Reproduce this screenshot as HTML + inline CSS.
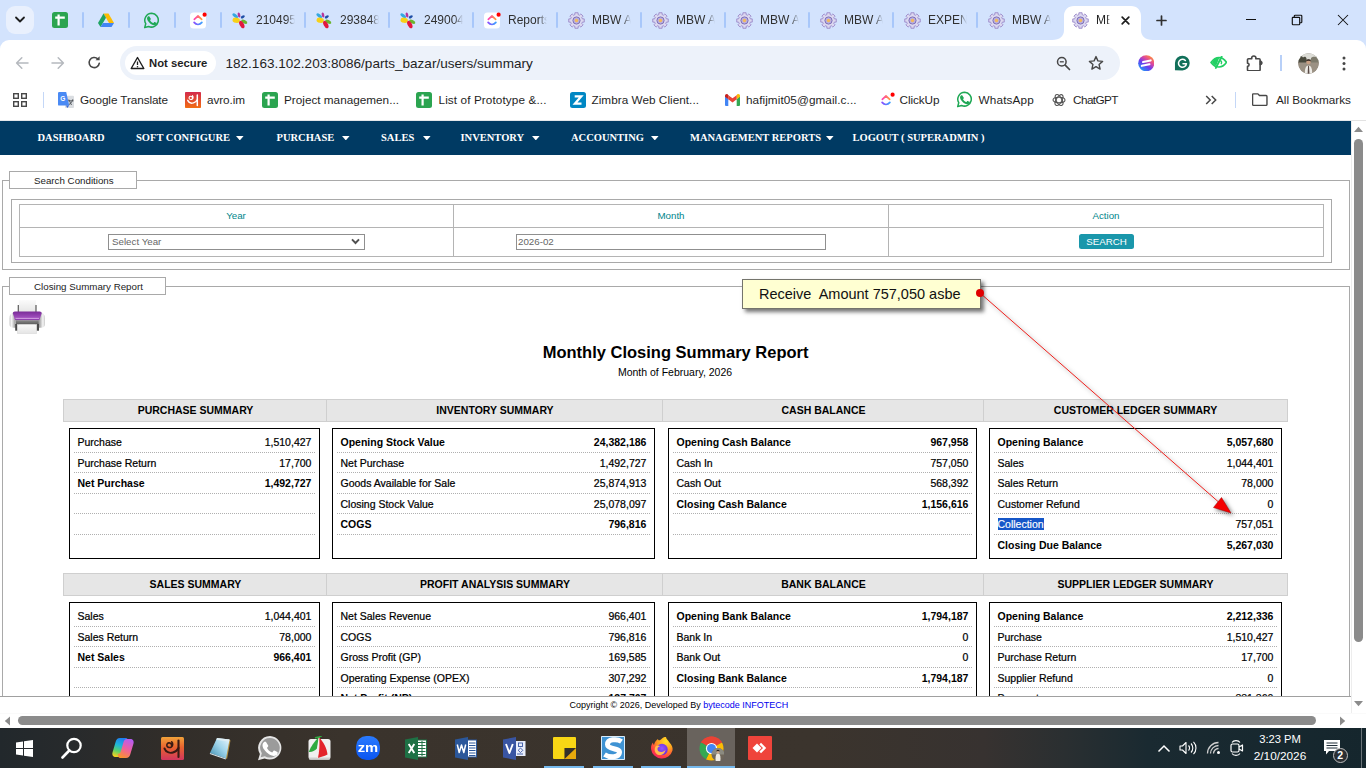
<!DOCTYPE html><html lang="en"><head><meta charset="utf-8"><title>MBW AUTO</title><style>
*{box-sizing:border-box;margin:0;padding:0}
html,body{width:1366px;height:768px;overflow:hidden;background:#fff}
body{position:relative;font-family:"Liberation Sans",sans-serif;color:#000}
.abs{position:absolute}
.t{position:absolute;white-space:pre;line-height:1}
/* chrome */
#tabstrip{left:0;top:0;width:1366px;height:52px;background:#d3e3fd}
#toolbar{left:0;top:40px;width:1366px;height:46px;background:#fff;border-radius:9px 9px 0 0}
#bmbar{left:0;top:86px;width:1366px;height:34px;background:#fff}
#bmline{left:0;top:120px;width:1366px;height:1px;background:#e3e6ea}
.tsep{position:absolute;top:12px;width:2px;height:16px;background:#a8c7fa;border-radius:1px}
.ttxt{position:absolute;top:13px;font-size:12px;line-height:15px;color:#303030;white-space:pre;overflow:hidden;width:39px;
  -webkit-mask-image:linear-gradient(90deg,#000 78%,transparent 100%);mask-image:linear-gradient(90deg,#000 78%,transparent 100%)}
.bm{position:absolute;top:92px;font-size:11.75px;line-height:15px;color:#1f1f1f;white-space:pre}
/* page */
#page{left:0;top:121px;width:1351px;height:592px;background:#fff;overflow:hidden}
#nav{left:0;top:0;width:1351px;height:34px;background:#003a63}
.nv{position:absolute;top:10px;font-family:"Liberation Serif",serif;font-weight:700;font-size:10.5px;line-height:13px;color:#fff;white-space:pre}
.caret{position:absolute;top:15px;width:0;height:0;border-left:3.75px solid transparent;border-right:3.75px solid transparent;border-top:4.5px solid #fff}
.ln{position:absolute;background:#a9a9a9}
.lg{position:absolute;border:1px solid #a9a9a9;background:#fff;font-size:9.75px;line-height:15px;padding-top:1px;color:#222;white-space:pre}
.teal{color:#00868b}
.hd{position:absolute;height:23px;background:#e6e6e6;border:1px solid #cfcfcf;font-weight:700;font-size:10.5px;line-height:21px;text-align:center;color:#000;white-space:pre}
.bx{position:absolute;border:1.5px solid #000;height:131px;background:#fff}
.rw{position:absolute;left:4px;right:4px;height:20.5px;border-bottom:1px dotted #b0b0b0;font-size:10.5px;line-height:20px;white-space:pre}
.rw b,.rw span{position:absolute;top:0}
.rw span{-webkit-text-stroke:.22px #000}
.rw .l{left:3.500px}
.rw .r{right:3.600px}
.rw.last{border-bottom:none}
.b{font-weight:700}
/* taskbar */
#taskbar{left:0;top:728px;width:1366px;height:40px;background:linear-gradient(90deg,#22282c 0,#272a2c 5%,#312d29 12%,#3a332c 25%,#3b342d 60%,#373230 72%,#2a2f31 78%,#1a2a31 84%,#15262d 100%)}
</style></head><body><div id="tabstrip" class="abs"><div class="abs" style="left:6px;top:6px;width:28px;height:28px;border-radius:9px;background:#e9f0fd"></div><svg class="abs" style="left:14px;top:15px" width="12" height="10" viewBox="0 0 12 10"><path d="M2 2.5 L6 6.5 L10 2.5" fill="none" stroke="#1f1f1f" stroke-width="1.8" stroke-linecap="round" stroke-linejoin="round"/></svg><svg class="abs" style="left:52px;top:12px" width="16" height="16" viewBox="0 0 16 16"><rect width="16" height="16" rx="2.5" fill="#2ba450"/><path d="M3.2 5.6h9.6M6.6 2.6v10.8" stroke="#fff" stroke-width="2.2" fill="none"/></svg><svg class="abs" style="left:98px;top:12px" width="16" height="16" viewBox="0 0 16 16"><path d="M5.5 1.5h5L16 11h-5z" fill="#fbbc04"/><path d="M5.5 1.5L0 11l2.5 4L8 5.8z" fill="#1fa463"/><path d="M2.5 15h11L16 11H5z" fill="#4285f4"/><path d="M8 5.8L5.5 1.5h5z" fill="#ea4335" opacity=".0"/></svg><svg class="abs" style="left:143px;top:11.5px" width="17" height="17" viewBox="0 0 17 17"><path d="M8.700 1.300a6.900 6.900 0 0 0-5.950 10.400L1.700 15.600l4-1.050A6.900 6.900 0 1 0 8.700 1.300z" fill="none" stroke="#1fa855" stroke-width="1.500" stroke-linejoin="round"/><path d="M6.500 4.700c-.2-.4-.35-.4-.55-.4h-.4c-.2 0-.45.050-.65.300-.25.250-.85.850-.85 2s.85 2.300 1 2.450c.1.150 1.650 2.650 4.100 3.600 2 .75 2.400.6 2.850.55.450-.05 1.400-.55 1.600-1.100.2-.55.2-1 .150-1.100-.05-.1-.2-.15-.45-.25l-1.550-.75c-.2-.1-.4-.1-.55.100l-.7.900c-.15.150-.25.200-.5.050-1.250-.6-2.150-1.350-2.850-2.600-.1-.250 0-.350.100-.5l.5-.65c.1-.15.100-.3.050-.45z" fill="#1fa855"/></svg><svg class="abs" style="left:190px;top:10.5px" width="18" height="18" viewBox="0 0 18 18"><defs><linearGradient id="cuA190" x1="0" y1="0" x2="1" y2="0"><stop offset="0" stop-color="#ff3fb4"/><stop offset="1" stop-color="#ff9a3c"/></linearGradient><linearGradient id="cuB190" x1="0" y1="0" x2="1" y2="0"><stop offset="0" stop-color="#8a4dff"/><stop offset="1" stop-color="#3aa0ff"/></linearGradient></defs><rect x="0" y="1.500" width="16" height="16" rx="3.500" fill="#fff"/><path d="M4.300 8.300L8 5l3.700 3.300" fill="none" stroke="url(#cuA190)" stroke-width="1.700" stroke-linecap="round" stroke-linejoin="round"/><path d="M4.100 11.400c1.100 1.400 2.400 2.100 3.900 2.100s2.800-.7 3.900-2.100" fill="none" stroke="url(#cuB190)" stroke-width="1.700" stroke-linecap="round"/><circle cx="14.600" cy="3.700" r="2.100" fill="#f00"/></svg><div class="tsep" style="left:82px"></div><div class="tsep" style="left:128px"></div><div class="tsep" style="left:174px"></div><div class="tsep" style="left:220px"></div><div class="tsep" style="left:304px"></div><div class="tsep" style="left:388px"></div><div class="tsep" style="left:472px"></div><div class="tsep" style="left:556px"></div><div class="tsep" style="left:640px"></div><div class="tsep" style="left:724px"></div><div class="tsep" style="left:808px"></div><div class="tsep" style="left:892px"></div><div class="tsep" style="left:976px"></div><svg class="abs" style="left:231px;top:12px" width="18" height="17" viewBox="0 0 18 17"><ellipse cx="4.200" cy="3.800" rx="3.300" ry="1.500" transform="rotate(38 4.200 3.800)" fill="#35a8e0"/><ellipse cx="8" cy="3" rx="1.300" ry="2.600" transform="rotate(-12 8 3)" fill="#b5359c"/><ellipse cx="11.800" cy="4.900" rx="2.200" ry="1.300" transform="rotate(-30 11.800 4.900)" fill="#1f4fa8"/><ellipse cx="5.200" cy="8.300" rx="3.700" ry="2.600" transform="rotate(10 5.200 8.300)" fill="#f7d117"/><ellipse cx="13.300" cy="9.700" rx="3.300" ry="1.700" transform="rotate(28 13.300 9.700)" fill="#6cb52d"/><ellipse cx="10.800" cy="12.600" rx="2.100" ry="4" transform="rotate(-28 10.800 12.600)" fill="#e3173e"/></svg><div class="ttxt" style="left:256px">210495</div><svg class="abs" style="left:315px;top:12px" width="18" height="17" viewBox="0 0 18 17"><ellipse cx="4.200" cy="3.800" rx="3.300" ry="1.500" transform="rotate(38 4.200 3.800)" fill="#35a8e0"/><ellipse cx="8" cy="3" rx="1.300" ry="2.600" transform="rotate(-12 8 3)" fill="#b5359c"/><ellipse cx="11.800" cy="4.900" rx="2.200" ry="1.300" transform="rotate(-30 11.800 4.900)" fill="#1f4fa8"/><ellipse cx="5.200" cy="8.300" rx="3.700" ry="2.600" transform="rotate(10 5.200 8.300)" fill="#f7d117"/><ellipse cx="13.300" cy="9.700" rx="3.300" ry="1.700" transform="rotate(28 13.300 9.700)" fill="#6cb52d"/><ellipse cx="10.800" cy="12.600" rx="2.100" ry="4" transform="rotate(-28 10.800 12.600)" fill="#e3173e"/></svg><div class="ttxt" style="left:340px">293848</div><svg class="abs" style="left:399px;top:12px" width="18" height="17" viewBox="0 0 18 17"><ellipse cx="4.200" cy="3.800" rx="3.300" ry="1.500" transform="rotate(38 4.200 3.800)" fill="#35a8e0"/><ellipse cx="8" cy="3" rx="1.300" ry="2.600" transform="rotate(-12 8 3)" fill="#b5359c"/><ellipse cx="11.800" cy="4.900" rx="2.200" ry="1.300" transform="rotate(-30 11.800 4.900)" fill="#1f4fa8"/><ellipse cx="5.200" cy="8.300" rx="3.700" ry="2.600" transform="rotate(10 5.200 8.300)" fill="#f7d117"/><ellipse cx="13.300" cy="9.700" rx="3.300" ry="1.700" transform="rotate(28 13.300 9.700)" fill="#6cb52d"/><ellipse cx="10.800" cy="12.600" rx="2.100" ry="4" transform="rotate(-28 10.800 12.600)" fill="#e3173e"/></svg><div class="ttxt" style="left:424px">249004</div><svg class="abs" style="left:484px;top:10.5px" width="18" height="18" viewBox="0 0 18 18"><defs><linearGradient id="cuA484" x1="0" y1="0" x2="1" y2="0"><stop offset="0" stop-color="#ff3fb4"/><stop offset="1" stop-color="#ff9a3c"/></linearGradient><linearGradient id="cuB484" x1="0" y1="0" x2="1" y2="0"><stop offset="0" stop-color="#8a4dff"/><stop offset="1" stop-color="#3aa0ff"/></linearGradient></defs><rect x="0" y="1.500" width="16" height="16" rx="3.500" fill="#fff"/><path d="M4.300 8.300L8 5l3.700 3.300" fill="none" stroke="url(#cuA484)" stroke-width="1.700" stroke-linecap="round" stroke-linejoin="round"/><path d="M4.100 11.400c1.100 1.400 2.400 2.100 3.900 2.100s2.800-.7 3.900-2.100" fill="none" stroke="url(#cuB484)" stroke-width="1.700" stroke-linecap="round"/><circle cx="14.600" cy="3.700" r="2.100" fill="#f00"/></svg><div class="ttxt" style="left:508px">Reports</div><svg class="abs" style="left:567.5px;top:12px" width="17" height="17" viewBox="0 0 17 17"><path d="M6.89 2.62L6.90 0.76L10.10 0.76L10.11 2.62L11.52 3.20L12.84 1.90L15.10 4.16L13.80 5.48L14.38 6.89L16.24 6.90L16.24 10.10L14.38 10.11L13.80 11.52L15.10 12.84L12.84 15.10L11.52 13.80L10.11 14.38L10.10 16.24L6.90 16.24L6.89 14.38L5.48 13.80L4.16 15.10L1.90 12.84L3.20 11.52L2.62 10.11L0.76 10.10L0.76 6.90L2.62 6.89L3.20 5.48L1.90 4.16L4.16 1.90L5.48 3.20Z" fill="#dcd8f0" stroke="#9a88c8" stroke-width=".9" stroke-linejoin="round"/><circle cx="8.500" cy="8.500" r="3.600" fill="#b9b0e0" stroke="#7f70b8" stroke-width="1"/><circle cx="8.500" cy="8.500" r="1.700" fill="#f2b95e"/></svg><div class="ttxt" style="left:592px">MBW AUTO</div><svg class="abs" style="left:651.5px;top:12px" width="17" height="17" viewBox="0 0 17 17"><path d="M6.89 2.62L6.90 0.76L10.10 0.76L10.11 2.62L11.52 3.20L12.84 1.90L15.10 4.16L13.80 5.48L14.38 6.89L16.24 6.90L16.24 10.10L14.38 10.11L13.80 11.52L15.10 12.84L12.84 15.10L11.52 13.80L10.11 14.38L10.10 16.24L6.90 16.24L6.89 14.38L5.48 13.80L4.16 15.10L1.90 12.84L3.20 11.52L2.62 10.11L0.76 10.10L0.76 6.90L2.62 6.89L3.20 5.48L1.90 4.16L4.16 1.90L5.48 3.20Z" fill="#dcd8f0" stroke="#9a88c8" stroke-width=".9" stroke-linejoin="round"/><circle cx="8.500" cy="8.500" r="3.600" fill="#b9b0e0" stroke="#7f70b8" stroke-width="1"/><circle cx="8.500" cy="8.500" r="1.700" fill="#f2b95e"/></svg><div class="ttxt" style="left:676px">MBW AUTO</div><svg class="abs" style="left:735.5px;top:12px" width="17" height="17" viewBox="0 0 17 17"><path d="M6.89 2.62L6.90 0.76L10.10 0.76L10.11 2.62L11.52 3.20L12.84 1.90L15.10 4.16L13.80 5.48L14.38 6.89L16.24 6.90L16.24 10.10L14.38 10.11L13.80 11.52L15.10 12.84L12.84 15.10L11.52 13.80L10.11 14.38L10.10 16.24L6.90 16.24L6.89 14.38L5.48 13.80L4.16 15.10L1.90 12.84L3.20 11.52L2.62 10.11L0.76 10.10L0.76 6.90L2.62 6.89L3.20 5.48L1.90 4.16L4.16 1.90L5.48 3.20Z" fill="#dcd8f0" stroke="#9a88c8" stroke-width=".9" stroke-linejoin="round"/><circle cx="8.500" cy="8.500" r="3.600" fill="#b9b0e0" stroke="#7f70b8" stroke-width="1"/><circle cx="8.500" cy="8.500" r="1.700" fill="#f2b95e"/></svg><div class="ttxt" style="left:760px">MBW AUTO</div><svg class="abs" style="left:819.5px;top:12px" width="17" height="17" viewBox="0 0 17 17"><path d="M6.89 2.62L6.90 0.76L10.10 0.76L10.11 2.62L11.52 3.20L12.84 1.90L15.10 4.16L13.80 5.48L14.38 6.89L16.24 6.90L16.24 10.10L14.38 10.11L13.80 11.52L15.10 12.84L12.84 15.10L11.52 13.80L10.11 14.38L10.10 16.24L6.90 16.24L6.89 14.38L5.48 13.80L4.16 15.10L1.90 12.84L3.20 11.52L2.62 10.11L0.76 10.10L0.76 6.90L2.62 6.89L3.20 5.48L1.90 4.16L4.16 1.90L5.48 3.20Z" fill="#dcd8f0" stroke="#9a88c8" stroke-width=".9" stroke-linejoin="round"/><circle cx="8.500" cy="8.500" r="3.600" fill="#b9b0e0" stroke="#7f70b8" stroke-width="1"/><circle cx="8.500" cy="8.500" r="1.700" fill="#f2b95e"/></svg><div class="ttxt" style="left:844px">MBW AUTO</div><svg class="abs" style="left:903.5px;top:12px" width="17" height="17" viewBox="0 0 17 17"><path d="M6.89 2.62L6.90 0.76L10.10 0.76L10.11 2.62L11.52 3.20L12.84 1.90L15.10 4.16L13.80 5.48L14.38 6.89L16.24 6.90L16.24 10.10L14.38 10.11L13.80 11.52L15.10 12.84L12.84 15.10L11.52 13.80L10.11 14.38L10.10 16.24L6.90 16.24L6.89 14.38L5.48 13.80L4.16 15.10L1.90 12.84L3.20 11.52L2.62 10.11L0.76 10.10L0.76 6.90L2.62 6.89L3.20 5.48L1.90 4.16L4.16 1.90L5.48 3.20Z" fill="#dcd8f0" stroke="#9a88c8" stroke-width=".9" stroke-linejoin="round"/><circle cx="8.500" cy="8.500" r="3.600" fill="#b9b0e0" stroke="#7f70b8" stroke-width="1"/><circle cx="8.500" cy="8.500" r="1.700" fill="#f2b95e"/></svg><div class="ttxt" style="left:928px">EXPENSE</div><svg class="abs" style="left:987.5px;top:12px" width="17" height="17" viewBox="0 0 17 17"><path d="M6.89 2.62L6.90 0.76L10.10 0.76L10.11 2.62L11.52 3.20L12.84 1.90L15.10 4.16L13.80 5.48L14.38 6.89L16.24 6.90L16.24 10.10L14.38 10.11L13.80 11.52L15.10 12.84L12.84 15.10L11.52 13.80L10.11 14.38L10.10 16.24L6.90 16.24L6.89 14.38L5.48 13.80L4.16 15.10L1.90 12.84L3.20 11.52L2.62 10.11L0.76 10.10L0.76 6.90L2.62 6.89L3.20 5.48L1.90 4.16L4.16 1.90L5.48 3.20Z" fill="#dcd8f0" stroke="#9a88c8" stroke-width=".9" stroke-linejoin="round"/><circle cx="8.500" cy="8.500" r="3.600" fill="#b9b0e0" stroke="#7f70b8" stroke-width="1"/><circle cx="8.500" cy="8.500" r="1.700" fill="#f2b95e"/></svg><div class="ttxt" style="left:1012px">MBW AUTO</div><svg class="abs" style="left:1052px;top:6px" width="101" height="34" viewBox="0 0 101 34"><path d="M0 34 C8 34 12 30 12 24 V10 C12 4 16 0 22 0 H79 C85 0 89 4 89 10 V24 C89 30 93 34 101 34 Z" fill="#fff"/></svg><svg class="abs" style="left:1072px;top:12px" width="17" height="17" viewBox="0 0 17 17"><path d="M6.89 2.62L6.90 0.76L10.10 0.76L10.11 2.62L11.52 3.20L12.84 1.90L15.10 4.16L13.80 5.48L14.38 6.89L16.24 6.90L16.24 10.10L14.38 10.11L13.80 11.52L15.10 12.84L12.84 15.10L11.52 13.80L10.11 14.38L10.10 16.24L6.90 16.24L6.89 14.38L5.48 13.80L4.16 15.10L1.90 12.84L3.20 11.52L2.62 10.11L0.76 10.10L0.76 6.90L2.62 6.89L3.20 5.48L1.90 4.16L4.16 1.90L5.48 3.20Z" fill="#dcd8f0" stroke="#9a88c8" stroke-width=".9" stroke-linejoin="round"/><circle cx="8.500" cy="8.500" r="3.600" fill="#b9b0e0" stroke="#7f70b8" stroke-width="1"/><circle cx="8.500" cy="8.500" r="1.700" fill="#f2b95e"/></svg><div class="ttxt" style="left:1096px;width:13.500px;color:#1f1f1f;-webkit-mask-image:linear-gradient(90deg,#000 78%,transparent 100%);mask-image:linear-gradient(90deg,#000 78%,transparent 100%)">MBW AUTO</div><svg class="abs" style="left:1120.500px;top:15.500px" width="9" height="9" viewBox="0 0 9 9"><path d="M1.200 1.200l6.600 6.600M7.800 1.200l-6.600 6.600" stroke="#1f1f1f" stroke-width="1.700" stroke-linecap="round"/></svg><svg class="abs" style="left:1155.500px;top:14.500px" width="11" height="11" viewBox="0 0 11 11"><path d="M5.500 1v9M1 5.500h9" stroke="#303030" stroke-width="1.700" stroke-linecap="round"/></svg><div class="abs" style="left:1246px;top:19px;width:10px;height:1.3px;background:#111"></div><svg class="abs" style="left:1291px;top:14px" width="12" height="12" viewBox="0 0 12 12"><rect x="1.300" y="3.300" width="7.400" height="7.400" rx=".7" fill="none" stroke="#111" stroke-width="1.150"/><path d="M3.300 3.200V2a.8.800 0 0 1 .8-.8H10a.8.800 0 0 1 .8.800V7.900a.8.800 0 0 1-.8.800H8.900" fill="none" stroke="#111" stroke-width="1.150"/></svg><svg class="abs" style="left:1337px;top:14px" width="12" height="12" viewBox="0 0 12 12"><path d="M1 1l10 10M11 1L1 11" stroke="#111" stroke-width="1.050"/></svg></div><div id="toolbar" class="abs"><svg class="abs" style="left:15px;top:16px" width="14" height="14" viewBox="0 0 14 14"><path d="M13 7H1.800M6.800 1.800L1.600 7l5.200 5.200" fill="none" stroke="#b5b9be" stroke-width="1.500" stroke-linecap="round" stroke-linejoin="round"/></svg><svg class="abs" style="left:51px;top:16px" width="14" height="14" viewBox="0 0 14 14"><path d="M1 7h11.200M7.200 1.800L12.400 7l-5.200 5.200" fill="none" stroke="#b5b9be" stroke-width="1.500" stroke-linecap="round" stroke-linejoin="round"/></svg><svg class="abs" style="left:87px;top:15px" width="15" height="15" viewBox="0 0 15 15"><path d="M12.300 8.200a5.100 5.100 0 1 1-1.500-4.300" fill="none" stroke="#474747" stroke-width="1.600" stroke-linecap="round"/><path d="M12.600 1.200v4.100H8.500z" fill="#474747"/></svg><div class="abs" style="left:120px;top:6px;width:1000px;height:34px;border-radius:17px;background:#edf2fa"></div><div class="abs" style="left:125px;top:11px;width:91px;height:24px;border-radius:12px;background:#fff"></div><svg class="abs" style="left:130px;top:16px" width="15" height="14" viewBox="0 0 15 14"><path d="M7.500 1.500L13.800 12.500H1.200Z" fill="none" stroke="#1f1f1f" stroke-width="1.400" stroke-linejoin="round"/><path d="M7.500 5.500v3.500" stroke="#1f1f1f" stroke-width="1.300"/><circle cx="7.500" cy="10.700" r=".8" fill="#1f1f1f"/></svg><div class="t" style="left:149px;top:16px;font-size:11.300px;font-weight:700;color:#1f1f1f;line-height:14px">Not secure</div><div class="t" style="left:225.500px;top:16px;font-size:13.550px;color:#1f1f1f;line-height:16px">182.163.102.203:8086/parts_bazar/users/summary</div><svg class="abs" style="left:1056px;top:16px" width="15" height="15" viewBox="0 0 15 15"><circle cx="5.800" cy="5.800" r="4.300" fill="none" stroke="#474747" stroke-width="1.500"/><path d="M9.200 9.200l4.300 4.300" stroke="#474747" stroke-width="1.700" stroke-linecap="round"/><path d="M3.800 5.800h4" stroke="#474747" stroke-width="1.300"/></svg><svg class="abs" style="left:1088px;top:15px" width="16" height="16" viewBox="0 0 16 16"><path d="M8 1.600l1.900 4.300 4.700.45-3.550 3.100 1.050 4.600L8 11.600l-4.100 2.450 1.050-4.600L1.400 6.350l4.700-.45z" fill="none" stroke="#474747" stroke-width="1.400" stroke-linejoin="round"/></svg><svg class="abs" style="left:1137.800px;top:14.800px" width="16.500" height="16.500" viewBox="0 0 18 18"><defs><linearGradient id="g1" x1=".85" y1=".1" x2=".2" y2=".95"><stop offset="0" stop-color="#ff8a3c"/><stop offset=".3" stop-color="#e0489a"/><stop offset=".6" stop-color="#6a3df0"/><stop offset="1" stop-color="#1d9bf5"/></linearGradient></defs><circle cx="9" cy="9" r="8.800" fill="url(#g1)"/><path d="M5.500 7.600l8.300-1.700M4.200 11.800l8.300-1.700" stroke="#fff" stroke-width="2.300" stroke-linecap="round"/></svg><svg class="abs" style="left:1173.800px;top:15px" width="16.500" height="16.500" viewBox="0 0 17 17"><path d="M1 15.800V8.300A7.600 7.600 0 1 1 8.600 15.900z" fill="#11705a"/><path d="M11.700 5.700a4.100 4.100 0 1 0 1.100 3.300H9.300" fill="none" stroke="#fff" stroke-width="1.600" stroke-linecap="round" stroke-linejoin="round"/></svg><svg class="abs" style="left:1209.500px;top:16.300px" width="17.500" height="12.600" viewBox="0 0 20 14"><path d="M1.200 7.200C4 3.200 7.300 1.600 10.300 1.600S16.400 3.300 18.800 7c-2.500 3.800-5.400 5.400-8.500 5.400S4 11 1.200 7.200z" fill="none" stroke="#22cf63" stroke-width="1.900" stroke-linejoin="round"/><path d="M10.500 2.200C6.500 2 3.800 4.500 2.300 7.200c1.200 1.700 2.800 3.200 4.700 4z" fill="#22cf63"/><path d="M13.300.6L6.700 13.400" stroke="#22cf63" stroke-width="2.200" stroke-linecap="round"/><path d="M11.800 4.800c1.300.8 1.800 2.600.9 4.300" fill="none" stroke="#22cf63" stroke-width="1.500"/></svg><svg class="abs" style="left:1246px;top:13.500px" width="18" height="17.500" viewBox="0 0 18 17.500"><path d="M2.500 4.700h3.300a2.100 2.100 0 1 1 4 0h3.300a1 1 0 0 1 1 1v10a1 1 0 0 1-1 1H2.500a1 1 0 0 1-1-1v-3.300a1.600 1.600 0 1 0 0-3.200V5.700a1 1 0 0 1 1-1z" fill="none" stroke="#474747" stroke-width="1.600" stroke-linejoin="round"/><path d="M14.100 6.800a2.100 2.100 0 1 1 0 4.200z" fill="#474747" stroke="#474747" stroke-width="1"/></svg><div class="abs" style="left:1280px;top:15px;width:1.500px;height:16px;background:#b8d0f8"></div><svg class="abs" style="left:1297.500px;top:12.500px" width="21" height="21" viewBox="0 0 21 21"><defs><clipPath id="av"><circle cx="10.500" cy="10.500" r="10.200"/></clipPath></defs><g clip-path="url(#av)"><rect width="21" height="21" fill="#8a8378"/><rect width="21" height="6.500" fill="#dcdcd6"/><path d="M0 4c2-1.500 4-1 5 .5 1.500-1.500 3-1 3.500 1V10H0z" fill="#4a4a3e"/><path d="M13 5c1.500-1.500 4-1.500 8-.5V10h-8z" fill="#7d7a6c"/><rect y="9.500" width="21" height="11.500" fill="#9b9184"/><path d="M6.800 21c0-5 .8-8.500 3.700-8.500s3.700 3.500 3.700 8.500z" fill="#efede8"/><path d="M10.100 12.800h.9l.5 8.200h-1.900z" fill="#5a4a46"/><circle cx="10.500" cy="9" r="2.300" fill="#c79f84"/><path d="M8.100 8.600a2.400 2.400 0 0 1 4.800 0c-.7-1.200-4-1.200-4.800 0z" fill="#2a211c"/></g></svg><svg class="abs" style="left:1342px;top:15.500px" width="4" height="17" viewBox="0 0 4 17"><circle cx="2" cy="2" r="1.500" fill="#474747"/><circle cx="2" cy="7.500" r="1.500" fill="#474747"/><circle cx="2" cy="13" r="1.500" fill="#474747"/></svg></div><div id="bmbar" class="abs"></div><div id="bmline" class="abs"></div><svg class="abs" style="left:13px;top:93px" width="14" height="14" viewBox="0 0 14 14"><g fill="none" stroke="#474747" stroke-width="1.400"><rect x=".7" y=".7" width="4.600" height="4.600"/><rect x="8.700" y=".7" width="4.600" height="4.600"/><rect x=".7" y="8.700" width="4.600" height="4.600"/><rect x="8.700" y="8.700" width="4.600" height="4.600"/></g></svg><div class="abs" style="left:42.500px;top:92px;width:1.500px;height:16px;background:#c4d7f7"></div><svg class="abs" style="left:58px;top:92px" width="16" height="16" viewBox="0 0 16 16"><rect x="7" y="3.800" width="9" height="12.200" rx="1" fill="#dadde1"/><path d="M10.800 7.500l2.700 5.500M14.800 7.300c-.5 2.500-2 4.300-4.300 5.500M10 8.800h5.500" stroke="#4a4f55" stroke-width=".9" fill="none"/><path d="M1.200 0H8.200l3 13.600H1.200A1.200 1.200 0 0 1 0 12.400V1.200A1.200 1.200 0 0 1 1.200 0z" fill="#4a8af4"/><path d="M8 13.600h3.200L9.300 16z" fill="#3367d6"/><text x="2.300" y="9" font-family="Liberation Sans,sans-serif" font-size="6.500" font-weight="700" fill="#fff">G</text></svg><div class="bm" style="left:80px;letter-spacing:-0.094px">Google Translate</div><svg class="abs" style="left:185px;top:92px" width="16" height="16" viewBox="0 0 16 16"><defs><linearGradient id="avr" x1="0" y1="0" x2="0" y2="1"><stop offset="0" stop-color="#d32a4c"/><stop offset="1" stop-color="#f26d12"/></linearGradient></defs><rect width="16" height="16" rx=".8" fill="url(#avr)"/><path d="M12.300 3v10.500" fill="none" stroke="#fff" stroke-width="1.500" stroke-linecap="round"/><path d="M7.400 6c0-1.100-.9-1.800-1.900-1.700-1.100.1-1.700 1.200-1.300 2.200.5 1.100 2.100 1.300 3.100.5 1-.8 1.100-2.400.1-3.400" fill="none" stroke="#fff" stroke-width="1.100" stroke-linecap="round"/><path d="M2.700 8.300c1 2.300 3.400 3.300 5.800 2.600 1.700-.5 3-1.600 3.700-3" fill="none" stroke="#fff" stroke-width="1.400" stroke-linecap="round"/></svg><div class="bm" style="left:207px;letter-spacing:-0.071px">avro.im</div><svg class="abs" style="left:262px;top:92px" width="16" height="16" viewBox="0 0 16 16"><rect width="16" height="16" rx="2.5" fill="#2ba450"/><path d="M3.2 5.6h9.6M6.6 2.6v10.8" stroke="#fff" stroke-width="2.2" fill="none"/></svg><div class="bm" style="left:284px;letter-spacing:0.000px">Project managemen...</div><svg class="abs" style="left:416px;top:92px" width="16" height="16" viewBox="0 0 16 16"><rect width="16" height="16" rx="2.5" fill="#2ba450"/><path d="M3.2 5.6h9.6M6.6 2.6v10.8" stroke="#fff" stroke-width="2.2" fill="none"/></svg><div class="bm" style="left:438.500px;letter-spacing:0.100px">List of Prototype &amp;...</div><svg class="abs" style="left:570px;top:92px" width="16" height="16" viewBox="0 0 16 16"><rect width="16" height="16" rx="2.500" fill="#0087c3"/><path d="M4.700 4.300h6.600L4.900 11.700h6.600" fill="none" stroke="#fff" stroke-width="2.200" stroke-linejoin="miter"/></svg><div class="bm" style="left:591.500px;letter-spacing:0.030px">Zimbra Web Client...</div><svg class="abs" style="left:725px;top:94px" width="15" height="12" viewBox="0 0 15 12"><path d="M0 1.500V11a1 1 0 0 0 1 1h2.300V5.300z" fill="#4285f4"/><path d="M15 1.500V11a1 1 0 0 1-1 1h-2.300V5.300z" fill="#34a853"/><path d="M11.700 1.200V5.300L15 2.800V1.800C15 .3 13.400-.5 12.200.4z" fill="#fbbc04"/><path d="M3.300 5.300V1.200L7.500 4.300l4.200-3.100v4.100L7.500 8.400z" fill="#ea4335"/><path d="M0 1.800v1l3.300 2.500V1.200L2.800.4C1.600-.5 0 .3 0 1.800z" fill="#c5221f"/></svg><div class="bm" style="left:746px;letter-spacing:0.062px">hafijmit05@gmail.c...</div><svg class="abs" style="left:878px;top:90.5px" width="18" height="18" viewBox="0 0 18 18"><defs><linearGradient id="cuA878" x1="0" y1="0" x2="1" y2="0"><stop offset="0" stop-color="#ff3fb4"/><stop offset="1" stop-color="#ff9a3c"/></linearGradient><linearGradient id="cuB878" x1="0" y1="0" x2="1" y2="0"><stop offset="0" stop-color="#8a4dff"/><stop offset="1" stop-color="#3aa0ff"/></linearGradient></defs><rect x="0" y="1.500" width="16" height="16" rx="3.500" fill="#fff"/><path d="M4.300 8.300L8 5l3.700 3.300" fill="none" stroke="url(#cuA878)" stroke-width="1.700" stroke-linecap="round" stroke-linejoin="round"/><path d="M4.100 11.400c1.100 1.400 2.400 2.100 3.900 2.100s2.800-.7 3.900-2.100" fill="none" stroke="url(#cuB878)" stroke-width="1.700" stroke-linecap="round"/><circle cx="14.600" cy="3.700" r="2.100" fill="#f00"/></svg><div class="bm" style="left:899.500px;letter-spacing:-0.071px">ClickUp</div><svg class="abs" style="left:956px;top:91px" width="17" height="17" viewBox="0 0 17 17"><path d="M8.700 1.300a6.900 6.900 0 0 0-5.950 10.400L1.700 15.600l4-1.050A6.900 6.900 0 1 0 8.700 1.300z" fill="none" stroke="#1fa855" stroke-width="1.500" stroke-linejoin="round"/><path d="M6.500 4.700c-.2-.4-.35-.4-.55-.4h-.4c-.2 0-.45.050-.65.300-.25.250-.85.850-.85 2s.85 2.300 1 2.450c.1.150 1.650 2.650 4.100 3.600 2 .75 2.400.6 2.850.55.450-.05 1.400-.55 1.600-1.100.2-.55.2-1 .150-1.100-.05-.1-.2-.15-.45-.25l-1.550-.75c-.2-.1-.4-.1-.55.100l-.7.900c-.15.150-.25.200-.5.050-1.250-.6-2.150-1.350-2.850-2.600-.1-.250 0-.350.100-.5l.5-.65c.1-.15.100-.3.050-.45z" fill="#1fa855"/></svg><div class="bm" style="left:978.500px;letter-spacing:0.162px">WhatsApp</div><svg class="abs" style="left:1052px;top:93px" width="14" height="14" viewBox="0 0 14 14"><g fill="none" stroke="#555" stroke-width="1.100"><ellipse cx="7" cy="7" rx="6" ry="2.800"/><ellipse cx="7" cy="7" rx="6" ry="2.800" transform="rotate(60 7 7)"/><ellipse cx="7" cy="7" rx="6" ry="2.800" transform="rotate(120 7 7)"/></g></svg><div class="bm" style="left:1073px;letter-spacing:-0.571px">ChatGPT</div><svg class="abs" style="left:1205px;top:95px" width="12" height="10" viewBox="0 0 12 10"><path d="M1.200 1l4 4-4 4M6.700 1l4 4-4 4" fill="none" stroke="#474747" stroke-width="1.500"/></svg><div class="abs" style="left:1234.500px;top:92px;width:1.500px;height:16px;background:#c4d7f7"></div><svg class="abs" style="left:1251.500px;top:93px" width="16" height="13.200" viewBox="0 0 17 14"><path d="M1.500 .9h4.800l1.600 1.800h7.100a.9.900 0 0 1 .9.900v8.600a.9.900 0 0 1-.9.900H1.500a.9.900 0 0 1-.9-.9V1.800a.9.900 0 0 1 .9-.9z" fill="none" stroke="#474747" stroke-width="1.500" stroke-linejoin="round"/></svg><div class="bm" style="left:1276px;letter-spacing:-0.008px">All Bookmarks</div><div id="page" class="abs"><div id="nav" class="abs"><div class="nv" style="left:37.5px">DASHBOARD</div><div class="nv" style="left:136px">SOFT CONFIGURE</div><svg class="abs" style="left:236.2px;top:14.800px" width="7.600" height="4.400" viewBox="0 0 7.600 4.400"><path d="M0 0h7.600L3.800 4.400z" fill="#fff"/></svg><div class="nv" style="left:276.5px">PURCHASE</div><svg class="abs" style="left:342.2px;top:14.800px" width="7.600" height="4.400" viewBox="0 0 7.600 4.400"><path d="M0 0h7.600L3.800 4.400z" fill="#fff"/></svg><div class="nv" style="left:381px">SALES</div><svg class="abs" style="left:423.2px;top:14.800px" width="7.600" height="4.400" viewBox="0 0 7.600 4.400"><path d="M0 0h7.600L3.800 4.400z" fill="#fff"/></svg><div class="nv" style="left:460.5px">INVENTORY</div><svg class="abs" style="left:532.2px;top:14.800px" width="7.600" height="4.400" viewBox="0 0 7.600 4.400"><path d="M0 0h7.600L3.800 4.400z" fill="#fff"/></svg><div class="nv" style="left:571px">ACCOUNTING</div><svg class="abs" style="left:651.2px;top:14.800px" width="7.600" height="4.400" viewBox="0 0 7.600 4.400"><path d="M0 0h7.600L3.800 4.400z" fill="#fff"/></svg><div class="nv" style="left:690px">MANAGEMENT REPORTS</div><svg class="abs" style="left:826.2px;top:14.800px" width="7.600" height="4.400" viewBox="0 0 7.600 4.400"><path d="M0 0h7.600L3.800 4.400z" fill="#fff"/></svg><div class="nv" style="left:852.5px">LOGOUT ( SUPERADMIN )</div></div><div class="abs" style="left:2px;top:59px;width:1348px;height:90px;border:1px solid #a9a9a9"></div><div class="lg" style="left:9px;top:50px;width:128px;height:18px;padding-left:24px">Search Conditions</div><div class="abs" style="left:11px;top:78px;width:1321px;height:64px;border:1px solid #a9a9a9"></div><div class="abs" style="left:19px;top:83px;width:1305px;height:53px;border:1px solid #b4b4b4"></div><div class="ln" style="left:19px;top:106px;width:1305px;height:1px;background:#b4b4b4"></div><div class="ln" style="left:453px;top:83px;width:1px;height:53px;background:#b4b4b4"></div><div class="ln" style="left:888px;top:83px;width:1px;height:53px;background:#b4b4b4"></div><div class="t teal" style="left:196px;top:89px;width:80px;text-align:center;font-size:9.750px;line-height:12px">Year</div><div class="t teal" style="left:631px;top:89px;width:80px;text-align:center;font-size:9.750px;line-height:12px">Month</div><div class="t teal" style="left:1066px;top:89px;width:80px;text-align:center;font-size:9.750px;line-height:12px">Action</div><div class="abs" style="left:108px;top:113px;width:257px;height:16px;border:1px solid #8f8f8f;background:#fff"></div><div class="t" style="left:112px;top:115px;font-size:9.750px;line-height:12px;color:#666">Select Year</div><svg class="abs" style="left:351px;top:117px" width="9" height="7" viewBox="0 0 9 7"><path d="M1 1.300l3.500 3.700L8 1.300" fill="none" stroke="#505050" stroke-width="1.900"/></svg><div class="abs" style="left:516px;top:113px;width:310px;height:16px;border:1px solid #8f8f8f;background:#fff"></div><div class="t" style="left:518px;top:115px;font-size:9.750px;line-height:12px;color:#666">2026-02</div><div class="abs" style="left:1079px;top:113px;width:55px;height:15px;border-radius:2.500px;background:#1a97ab;color:#fff;font-size:9.750px;line-height:15px;text-align:center">SEARCH</div><div class="abs" style="left:2px;top:165px;width:1348px;height:600px;border:1px solid #a9a9a9"></div><div class="lg" style="left:9px;top:156px;width:157px;height:18px;padding-left:24px">Closing Summary Report</div><svg class="abs" style="left:4px;top:175px" width="50" height="42" viewBox="0 0 50 42">
<defs><linearGradient id="pg" x1="0" y1="0" x2="0" y2="1"><stop offset="0" stop-color="#7a2b98"/><stop offset=".7" stop-color="#a04fbd"/><stop offset="1" stop-color="#8a3aa8"/></linearGradient>
<linearGradient id="pb" x1="0" y1="0" x2="1" y2="0"><stop offset="0" stop-color="#c9c9c9"/><stop offset=".06" stop-color="#f6f6f6"/><stop offset=".15" stop-color="#a6a6a6"/><stop offset=".25" stop-color="#c4c4c4"/><stop offset=".75" stop-color="#c4c4c4"/><stop offset=".85" stop-color="#a6a6a6"/><stop offset=".94" stop-color="#f6f6f6"/><stop offset="1" stop-color="#c9c9c9"/></linearGradient>
<linearGradient id="pp" x1="0" y1="0" x2="0" y2="1"><stop offset="0" stop-color="#fbfbfb"/><stop offset="1" stop-color="#e4e4e4"/></linearGradient>
<linearGradient id="pd" x1="0" y1="0" x2="0" y2="1"><stop offset="0" stop-color="#8a8a8a"/><stop offset="1" stop-color="#5a5a5a"/></linearGradient></defs>
<rect x="14.800" y="4" width="17.200" height="13" fill="url(#pp)"/>
<rect x="13.700" y="9" width="1.200" height="7.500" fill="#5a5a5a"/><rect x="31.400" y="9" width="1.200" height="7.500" fill="#5a5a5a"/>
<path d="M5.500 22.500q0-6.300 6-6.500h23.500q6 .2 6 6.500v5.500q0 3.800-4 3.800h-27.500q-4 0-4-3.800z" fill="url(#pb)"/>
<path d="M8.800 17.200q0-1.700 2-1.700h24.900q2 0 2 1.700l-2 6.100q-.3 1-1.500 1h-21.900q-1.200 0-1.500-1z" fill="url(#pg)"/>
<rect x="11.500" y="21.900" width="23.500" height=".9" fill="#e3bdf0" opacity=".85"/>
<rect x="12" y="24.300" width="22.700" height="4.200" fill="url(#pd)"/>
<rect x="11.200" y="28" width="3.600" height="6.700" fill="#4a4a4a"/><rect x="31.400" y="28" width="3.600" height="6.700" fill="#4a4a4a"/>
<rect x="13.200" y="28.400" width="19.600" height="9.300" fill="url(#pp)" stroke="#d5d5d5" stroke-width=".4"/>
</svg><div class="t b" style="left:375.600px;top:222px;width:600px;text-align:center;font-size:16.500px;line-height:19px">Monthly Closing Summary Report</div><div class="t" style="left:375px;top:245px;width:600px;text-align:center;font-size:10.500px;line-height:13px">Month of February, 2026</div><div class="hd" style="left:63px;top:278px;width:265px">PURCHASE SUMMARY</div><div class="bx" style="left:69px;top:307px;width:251px"><div class="rw" style="top:3.0px"><span class="l">Purchase</span><span class="r">1,510,427</span></div><div class="rw" style="top:23.5px"><span class="l">Purchase Return</span><span class="r">17,700</span></div><div class="rw" style="top:44.0px"><b class="l">Net Purchase</b><b class="r">1,492,727</b></div><div class="rw" style="top:64.5px"></div><div class="rw" style="top:85.0px"></div><div class="rw last" style="top:105.5px"></div></div><div class="hd" style="left:326px;top:278px;width:338px">INVENTORY SUMMARY</div><div class="bx" style="left:332px;top:307px;width:323px"><div class="rw" style="top:3.0px"><b class="l">Opening Stock Value</b><b class="r">24,382,186</b></div><div class="rw" style="top:23.5px"><span class="l">Net Purchase</span><span class="r">1,492,727</span></div><div class="rw" style="top:44.0px"><span class="l">Goods Available for Sale</span><span class="r">25,874,913</span></div><div class="rw" style="top:64.5px"><span class="l">Closing Stock Value</span><span class="r">25,078,097</span></div><div class="rw" style="top:85.0px"><b class="l">COGS</b><b class="r">796,816</b></div><div class="rw last" style="top:105.5px"></div></div><div class="hd" style="left:662px;top:278px;width:323px">CASH BALANCE</div><div class="bx" style="left:668px;top:307px;width:309px"><div class="rw" style="top:3.0px"><b class="l">Opening Cash Balance</b><b class="r">967,958</b></div><div class="rw" style="top:23.5px"><span class="l">Cash In</span><span class="r">757,050</span></div><div class="rw" style="top:44.0px"><span class="l">Cash Out</span><span class="r">568,392</span></div><div class="rw" style="top:64.5px"><b class="l">Closing Cash Balance</b><b class="r">1,156,616</b></div><div class="rw" style="top:85.0px"></div><div class="rw last" style="top:105.5px"></div></div><div class="hd" style="left:983px;top:278px;width:305px">CUSTOMER LEDGER SUMMARY</div><div class="bx" style="left:989px;top:307px;width:293px"><div class="rw" style="top:3.0px"><b class="l">Opening Balance</b><b class="r">5,057,680</b></div><div class="rw" style="top:23.5px"><span class="l">Sales</span><span class="r">1,044,401</span></div><div class="rw" style="top:44.0px"><span class="l">Sales Return</span><span class="r">78,000</span></div><div class="rw" style="top:64.5px"><span class="l">Customer Refund</span><span class="r">0</span></div><div class="rw" style="top:85.0px"><span class="l"><i style="font-style:normal;background:#1556c8;color:#fff;-webkit-text-stroke:.15px #fff;display:inline-block;line-height:12px;padding:0">Collection</i></span><span class="r">757,051</span></div><div class="rw last" style="top:105.5px"><b class="l">Closing Due Balance</b><b class="r">5,267,030</b></div></div><div class="hd" style="left:63px;top:452px;width:265px">SALES SUMMARY</div><div class="bx" style="left:69px;top:481px;width:251px"><div class="rw" style="top:3.0px"><span class="l">Sales</span><span class="r">1,044,401</span></div><div class="rw" style="top:23.5px"><span class="l">Sales Return</span><span class="r">78,000</span></div><div class="rw" style="top:44.0px"><b class="l">Net Sales</b><b class="r">966,401</b></div><div class="rw" style="top:64.5px"></div><div class="rw" style="top:85.0px"></div><div class="rw last" style="top:105.5px"></div></div><div class="hd" style="left:326px;top:452px;width:338px">PROFIT ANALYSIS SUMMARY</div><div class="bx" style="left:332px;top:481px;width:323px"><div class="rw" style="top:3.0px"><span class="l">Net Sales Revenue</span><span class="r">966,401</span></div><div class="rw" style="top:23.5px"><span class="l">COGS</span><span class="r">796,816</span></div><div class="rw" style="top:44.0px"><span class="l">Gross Profit (GP)</span><span class="r">169,585</span></div><div class="rw" style="top:64.5px"><span class="l">Operating Expense (OPEX)</span><span class="r">307,292</span></div><div class="rw" style="top:85.0px"><b class="l">Net Profit (NP)</b><b class="r">-137,707</b></div><div class="rw last" style="top:105.5px"></div></div><div class="hd" style="left:662px;top:452px;width:323px">BANK BALANCE</div><div class="bx" style="left:668px;top:481px;width:309px"><div class="rw" style="top:3.0px"><b class="l">Opening Bank Balance</b><b class="r">1,794,187</b></div><div class="rw" style="top:23.5px"><span class="l">Bank In</span><span class="r">0</span></div><div class="rw" style="top:44.0px"><span class="l">Bank Out</span><span class="r">0</span></div><div class="rw" style="top:64.5px"><b class="l">Closing Bank Balance</b><b class="r">1,794,187</b></div><div class="rw" style="top:85.0px"></div><div class="rw last" style="top:105.5px"></div></div><div class="hd" style="left:983px;top:452px;width:305px">SUPPLIER LEDGER SUMMARY</div><div class="bx" style="left:989px;top:481px;width:293px"><div class="rw" style="top:3.0px"><b class="l">Opening Balance</b><b class="r">2,212,336</b></div><div class="rw" style="top:23.5px"><span class="l">Purchase</span><span class="r">1,510,427</span></div><div class="rw" style="top:44.0px"><span class="l">Purchase Return</span><span class="r">17,700</span></div><div class="rw" style="top:64.5px"><span class="l">Supplier Refund</span><span class="r">0</span></div><div class="rw" style="top:85.0px"><span class="l">Payment</span><span class="r">881,860</span></div><div class="rw last" style="top:105.5px"><b class="l">Closing Due Balance</b><b class="r">2,858,603</b></div></div><div class="abs" style="left:0;top:575px;width:1351px;height:17px;background:#fff;border-top:1px solid #a0a0a0"></div><div class="t" style="left:569.500px;top:579px;font-size:9px;line-height:11px;color:#000">Copyright © 2026, Developed By <span style="color:#0000ee">bytecode INFOTECH</span></div></div><svg class="abs" style="left:0;top:0;pointer-events:none;filter:drop-shadow(2px 2.500px 2px rgba(0,0,0,.5))" width="1366" height="768" viewBox="0 0 1366 768">
<line x1="980" y1="293" x2="1222" y2="505" stroke="#f0201c" stroke-width="1"/>
<polygon points="1231,513 1213.500,507.500 1221.500,497.500" fill="#f40000" stroke="#a00000" stroke-width=".5" stroke-linejoin="round"/>
</svg><div class="abs" style="left:742px;top:279px;width:239px;height:29.700px;background:#ffffd2;border:1px solid #74746c;box-shadow:2.500px 3px 4px rgba(0,0,0,.55)"></div><div class="t" style="left:759px;top:286px;font-size:14.500px;line-height:16px;color:#111">Receive  Amount 757,050 asbe</div><div class="abs" style="left:975.500px;top:288.800px;width:8.500px;height:8.500px;border-radius:50%;background:#e00000"></div><div class="abs" style="left:1351px;top:120px;width:15px;height:593px;background:#fff;border-left:1px solid #ededed;border-top:1px solid #e2e2e2"></div><div class="abs" style="left:1354px;top:139px;width:9px;height:503px;border-radius:4.500px;background:#8b8b8b"></div><svg class="abs" style="left:1353px;top:126px" width="11" height="7" viewBox="0 0 11 7"><path d="M5.500 .8L10 6H1z" fill="#8b8b8b"/></svg><svg class="abs" style="left:1353px;top:700px" width="11" height="7" viewBox="0 0 11 7"><path d="M5.500 6.200L10 1H1z" fill="#8b8b8b"/></svg><div class="abs" style="left:0;top:713px;width:1366px;height:15px;background:#fff;border-top:1px solid #fafafa"></div><div class="abs" style="left:18px;top:716px;width:1298px;height:9px;border-radius:4.500px;background:#8b8b8b"></div><svg class="abs" style="left:4px;top:714.500px" width="7" height="12" viewBox="0 0 7 12"><path d="M.8 6L6 1.500v9z" fill="#8b8b8b"/></svg><svg class="abs" style="left:1339px;top:714.500px" width="7" height="12" viewBox="0 0 7 12"><path d="M6.200 6L1 1.500v9z" fill="#8b8b8b"/></svg><div id="taskbar" class="abs"><div class="abs" style="left:687px;top:0;width:48px;height:40px;background:#69635d"></div><div class="abs" style="left:544px;top:38px;width:40px;height:2px;background:#76b9ed"></div><div class="abs" style="left:593px;top:38px;width:40px;height:2px;background:#76b9ed"></div><div class="abs" style="left:641px;top:38px;width:40px;height:2px;background:#76b9ed"></div><div class="abs" style="left:687px;top:38px;width:48px;height:2px;background:#76b9ed"></div><svg class="abs" style="left:15.5px;top:11.5px" width="17" height="17" viewBox="0 0 17 17"><path d="M0 2.400L7 1.400V8H0zM8 1.250L17 0V8H8zM0 9H7v6.600L0 14.600zM8 9h9v8L8 15.750z" fill="#fff"/></svg><svg class="abs" style="left:61.0px;top:9.0px" width="22" height="22" viewBox="0 0 22 22"><circle cx="13" cy="8.500" r="6.700" fill="none" stroke="#fff" stroke-width="2.200"/><path d="M8.300 13.500L1.500 20.500" stroke="#fff" stroke-width="2.600" stroke-linecap="round"/></svg><svg class="abs" style="left:111.0px;top:9.0px" width="24" height="22" viewBox="0 0 24 22"><defs><linearGradient id="cp1" x1=".6" y1="0" x2=".3" y2="1"><stop offset="0" stop-color="#1f7bf2"/><stop offset=".4" stop-color="#1fb6d8"/><stop offset=".7" stop-color="#5bd16a"/><stop offset="1" stop-color="#f4d21f"/></linearGradient><linearGradient id="cp2" x1=".7" y1="0" x2=".3" y2="1"><stop offset="0" stop-color="#b65cf2"/><stop offset=".5" stop-color="#ee5fa0"/><stop offset="1" stop-color="#f7922e"/></linearGradient></defs><path d="M15 1H9C6.500 1 5.300 2.500 4.600 5L1.500 15.500C.8 18 2.200 20 4.700 20H8c2 0 3-1.500 3.600-3.500L14 8c.5-2 1.600-3 3.300-3C16.900 2.500 16.300 1 15 1z" fill="url(#cp1)"/><path d="M9 21h6c2.500 0 3.700-1.500 4.400-4l3.100-10.500C23.200 4 21.800 2 19.300 2H16c-2 0-3 1.500-3.600 3.500L10 14c-.5 2-1.600 3-3.300 3 .4 2.500 1 4 2.300 4z" fill="url(#cp2)"/></svg><svg class="abs" style="left:160.5px;top:8.5px" width="23" height="23" viewBox="0 0 23 23"><defs><linearGradient id="av2" x1="0" y1="0" x2="0" y2="1"><stop offset="0" stop-color="#f2a33a"/><stop offset=".45" stop-color="#e8622f"/><stop offset="1" stop-color="#d2365e"/></linearGradient></defs><rect width="23" height="23" rx="1.500" fill="url(#av2)"/><path d="M17.500 3.500V20" fill="none" stroke="#3a1a14" stroke-width="2.100" stroke-linecap="round"/><path d="M10.500 8.300c0-1.600-1.300-2.600-2.700-2.400-1.600.2-2.400 1.800-1.800 3.200.7 1.600 3 1.900 4.500.7 1.500-1.200 1.600-3.600.2-5" fill="none" stroke="#3a1a14" stroke-width="1.600" stroke-linecap="round"/><path d="M3.500 11.500c1.500 3.500 5 5 8.500 4 2.500-.7 4.500-2.500 5.500-4.500" fill="none" stroke="#3a1a14" stroke-width="2" stroke-linecap="round"/></svg><svg class="abs" style="left:208.5px;top:8.5px" width="23" height="23" viewBox="0 0 23 23"><defs><linearGradient id="np1" x1="1" y1="0" x2="0" y2="1"><stop offset="0" stop-color="#e9f7fd"/><stop offset=".45" stop-color="#9fd4ea"/><stop offset="1" stop-color="#3b8db0"/></linearGradient></defs><path d="M19.500 2l2 1.500-3.500 18.500-1.800-1.200z" fill="#b59142"/><path d="M8 1l12.500 1.500L17 21.500 1 16z" fill="url(#np1)"/><path d="M8 1l12.500 1.500-.4 2L7.300 2.700z" fill="#dfeef5"/><path d="M1 16l16 5.500-.3 1L.8 17z" fill="#d8e6ec"/></svg><svg class="abs" style="left:256.5px;top:7.0px" width="26" height="26" viewBox="0 0 26 26"><path d="M13 1a11.800 11.800 0 0 0-10.100 17.900L1 25.300l6.600-1.800A11.800 11.800 0 1 0 13 1z" fill="#e6e6e6"/><path d="M13 3a9.800 9.800 0 0 0-8.200 15.200L3.700 22.300l4.200-1.100A9.800 9.800 0 1 0 13 3z" fill="#9b9b9b"/><path d="M9.300 7.400c-.3-.6-.5-.6-.8-.6h-.7c-.3 0-.7.100-1 .5-.4.400-1.300 1.300-1.300 3.100s1.300 3.600 1.500 3.900c.2.200 2.600 4.100 6.400 5.600 3.200 1.200 3.800 1 4.500.9.700-.1 2.200-.9 2.500-1.800.3-.9.300-1.600.2-1.800-.1-.2-.3-.2-.7-.4l-2.500-1.200c-.3-.1-.6-.2-.8.200l-1.200 1.400c-.2.200-.4.300-.8.100-2-.9-3.400-2.200-4.500-4.100-.2-.4 0-.6.200-.8l.8-1c.2-.3.200-.5.100-.8z" fill="#fff"/></svg><svg class="abs" style="left:307.5px;top:8.0px" width="23" height="24" viewBox="0 0 23 24"><rect x=".5" y="3" width="22" height="20.500" rx="2.500" fill="#f0f0f0"/><path d="M1 21.500h21v1.200a1 1 0 0 1-1 1H2a1 1 0 0 1-1-1z" fill="#d0d0d0"/><path d="M10.800 1C6.500 5.500 2.500 10.500 0.800 16c3 .3 6-1 8-3.200z" fill="#2eaa3f"/><path d="M10.800 1c5 5.500 8.200 11.500 8.700 17.500-3.500 1.800-6.500 2.300-10 3.500 1.500-7 1.800-14 1.300-21z" fill="#e3232b"/><path d="M10.800 1c.5 7 .2 14-1.300 21" stroke="#fff" stroke-width=".8" fill="none"/><path d="M7.500 1.800l3.300-.8 2.500-.8" stroke="#2eaa3f" stroke-width="1.400" fill="none" stroke-linecap="round"/></svg><div class="abs" style="left:355.500px;top:8px;width:24px;height:24px;border-radius:10.500px;background:linear-gradient(180deg,#2a7bff,#0b55f0)"></div><div class="t" style="left:355.500px;top:13.500px;width:24px;text-align:center;font-size:12.500px;font-weight:700;color:#fff;line-height:12px;transform:scaleX(1.180)">zm</div><svg class="abs" style="left:405.0px;top:8.5px" width="22" height="23" viewBox="0 0 22 23"><rect x="11" y="3" width="10.500" height="17" fill="#fff"/><g stroke="#1e7145" stroke-width="1"><path d="M13 5.500h7.500M13 8.500h7.500M13 11.500h7.500M13 14.500h7.500M13 17.500h7.500"/><path d="M17 4v15"/></g><rect x="11" y="3" width="10.500" height="17" fill="none" stroke="#1e7145" stroke-width="1"/><path d="M0 2.500L13 0v23L0 20.500z" fill="#1e7145"/><path d="M3.700 7l5.600 9M9.300 7l-5.600 9" stroke="#fff" stroke-width="1.900"/></svg><svg class="abs" style="left:455.0px;top:8.5px" width="22" height="23" viewBox="0 0 22 23"><rect x="11" y="3" width="10.500" height="17" fill="#fff"/><g stroke="#2b579a" stroke-width="1.100"><path d="M14 6h6.500M14 8.500h6.500M14 11h6.500M14 13.500h6.500M14 16h6.500M14 18.500h6.500"/></g><rect x="11" y="3" width="10.500" height="17" fill="none" stroke="#2b579a" stroke-width="1"/><path d="M0 2.500L13 0v23L0 20.500z" fill="#2b579a"/><path d="M2.300 7.500l1.900 8 2.300-7.500 2.300 7.500 1.900-8" stroke="#fff" stroke-width="1.500" fill="none" stroke-linejoin="round"/></svg><svg class="abs" style="left:503.0px;top:8.5px" width="23" height="23" viewBox="0 0 23 23"><rect x="11" y="4" width="11.500" height="15" fill="#e9eefb"/><rect x="15.500" y="6" width="4" height="3.500" fill="none" stroke="#3955a3" stroke-width=".9"/><path d="M17.500 11l2.300 2.300-2.300 2.300-2.300-2.300z" fill="none" stroke="#3955a3" stroke-width=".9"/><path d="M14 17h6" stroke="#3955a3" stroke-width=".9"/><path d="M0 2.500L13 0v23L0 20.500z" fill="#3955a3"/><path d="M3 7l3.400 9L9.800 7" stroke="#fff" stroke-width="1.900" fill="none" stroke-linejoin="round"/></svg><svg class="abs" style="left:552.5px;top:9.0px" width="23" height="22" viewBox="0 0 23 22"><rect width="23" height="22" rx="1" fill="#f8d615"/><path d="M11.500 11h11.500v11H11.500z" fill="#e8a90c"/><path d="M11.500 11H23L11.500 22z" fill="#33302a"/></svg><svg class="abs" style="left:601.0px;top:8.0px" width="24" height="24" viewBox="0 0 24 24"><rect width="24" height="24" rx=".8" fill="#d9ecfa"/><rect x="1" y="1" width="22" height="22" fill="#3f93d3"/><path d="M20.500 5.500C16 2.500 6.500 3 6.500 8.500S19 11.500 18.500 16.500 9 22 3.500 18.500" fill="none" stroke="#fff" stroke-width="5"/><path d="M18.500 6.500C15 4.500 9 5 9 8.500" fill="none" stroke="#3f93d3" stroke-width="1.300" opacity=".0"/></svg><svg class="abs" style="left:649.5px;top:8.0px" width="24" height="24" viewBox="0 0 24 24"><defs><radialGradient id="ff1" cx=".7" cy=".2" r="1"><stop offset="0" stop-color="#ffe226"/><stop offset=".4" stop-color="#ff9a1f"/><stop offset=".75" stop-color="#ff3647"/><stop offset="1" stop-color="#e31587"/></radialGradient><radialGradient id="ff2" cx=".5" cy=".4" r=".6"><stop offset="0" stop-color="#9059ff"/><stop offset="1" stop-color="#6e2bd9"/></radialGradient></defs><path d="M12 2.500c2-2 4-1.500 4-1.500 0 2 2 3 3.500 5.500C22 9 23 12 22.500 14.500A11 11 0 0 1 1 13c-.3-3 1-5.500 2-6.500 0 1 .5 2 1 2.500C4.500 6 7 3.500 8 3c0 1.500 2 2 4-.5z" fill="url(#ff1)"/><circle cx="12" cy="13.500" r="5.700" fill="url(#ff2)"/><path d="M6.500 10c2-1 4 0 5 1 1.500 1.500 4 1 4.500-.5 2 3-.5 8-4.500 8s-6.500-4-5-8.500z" fill="#ff8a16" opacity=".0"/><path d="M5.500 10.500c1.500-1.500 3.500-1 4.500 0-1.500 0-2.500 1-2.500 2.500 0 2 2 3.500 4.500 3 2-.4 3-1.500 3.500-2.500-.5 4-3.500 6-6.500 5.500-3.500-.6-5.500-4.500-3.500-8.500z" fill="#ffbd4f"/></svg><svg class="abs" style="left:698.5px;top:7.5px" width="25" height="25" viewBox="0 0 25 25"><defs><clipPath id="cc"><circle cx="12.500" cy="12.500" r="12"/></clipPath></defs><g clip-path="url(#cc)"><path d="M12.500 12.500L-2 4 12.500-14 27 4z" fill="#ea4335"/><path d="M12.500 12.500L27 4l4 25H4z" fill="#fbbc04"/><path d="M12.500 12.500L4 29-6 18-2 4z" fill="#34a853"/><path d="M0 0h25v6.500H2z" fill="#ea4335"/></g><circle cx="12.500" cy="12.500" r="5.600" fill="#fff"/><circle cx="12.500" cy="12.500" r="4.500" fill="#4285f4"/><circle cx="19" cy="18.500" r="6.500" fill="#6f665a"/><path d="M12.500 18.500a6.500 6.500 0 0 1 13 0z" fill="#8b8a80"/><ellipse cx="19" cy="22.500" rx="2.500" ry="5" fill="#eeeae4"/><circle cx="19" cy="16" r="1.700" fill="#c9a58a"/><path d="M17.300 15.500a1.700 1.700 0 0 1 3.400 0c-.8-.8-2.600-.8-3.400 0z" fill="#2a221d"/></svg><svg class="abs" style="left:748.0px;top:8.0px" width="24" height="24" viewBox="0 0 24 24"><rect width="24" height="24" rx="1" fill="#ef443b"/><path d="M9 7.500l4.500 4.500L9 16.500 4.500 12z" fill="#fff"/><path d="M13 6.800l5.200 5.200-5.200 5.200-1.600-1.600 3.600-3.600-3.600-3.600z" fill="#fff"/></svg><svg class="abs" style="left:1157.0px;top:15.5px" width="14" height="9" viewBox="0 0 14 9"><path d="M1.500 7.500L7 2l5.500 5.500" fill="none" stroke="#fff" stroke-width="1.500"/></svg><svg class="abs" style="left:1179.0px;top:13.0px" width="18" height="14" viewBox="0 0 18 14"><path d="M1 5h2.500L7 1.500v11L3.500 9H1z" fill="none" stroke="#fff" stroke-width="1.100" stroke-linejoin="round"/><path d="M9.500 4.500a3.500 3.500 0 0 1 0 5M12 2.500a6.500 6.500 0 0 1 0 9M14.500 .8a9 9 0 0 1 0 12.400" fill="none" stroke="#fff" stroke-width="1.100"/></svg><svg class="abs" style="left:1206.0px;top:13.0px" width="16" height="14" viewBox="0 0 16 14"><path d="M1.500 12.500A11 11 0 0 1 12.500 1.500M4.500 12.500a8 8 0 0 1 8-8M7.500 12.500a5 5 0 0 1 5-5" fill="none" stroke="#cfcfcf" stroke-width="1.300" transform="translate(0 0)"/><circle cx="12.500" cy="11.500" r="1.500" fill="#fff"/></svg><svg class="abs" style="left:1230.0px;top:11.0px" width="14" height="18" viewBox="0 0 14 18"><rect x="1" y="5" width="8" height="8" rx="1.500" fill="none" stroke="#fff" stroke-width="1.200"/><path d="M9 8l3.500-2v6L9 10" fill="none" stroke="#fff" stroke-width="1.200" stroke-linejoin="round"/><path d="M2 3.500C3.500 1 8.500 1 10 3.500M2 14.500c1.500 2.500 6.500 2.500 8 0" fill="none" stroke="#fff" stroke-width="1.100"/></svg><div class="t" style="left:1250px;top:5px;width:60px;text-align:center;font-size:11.200px;color:#fff;line-height:13px">3:23 PM</div><div class="t" style="left:1250px;top:22px;width:60px;text-align:center;font-size:11.800px;color:#fff;line-height:13px">2/10/2026</div><svg class="abs" style="left:1323.0px;top:10.5px" width="18" height="17" viewBox="0 0 18 17"><path d="M1 1h16v11H6l-3 3.500V12H1z" fill="#fff"/><path d="M3.500 4h11M3.500 6.500h11M3.500 9h11" stroke="#22303a" stroke-width="1"/></svg><div class="abs" style="left:1332.700px;top:19.500px;width:15px;height:15px;border-radius:50%;background:#2b2f33;border:1.500px solid #bfbfbf;color:#fff;font-size:10.500px;font-weight:700;line-height:12px;text-align:center">2</div><div class="abs" style="left:1361px;top:0;width:1px;height:40px;background:#6a7378"></div></div></body></html>
